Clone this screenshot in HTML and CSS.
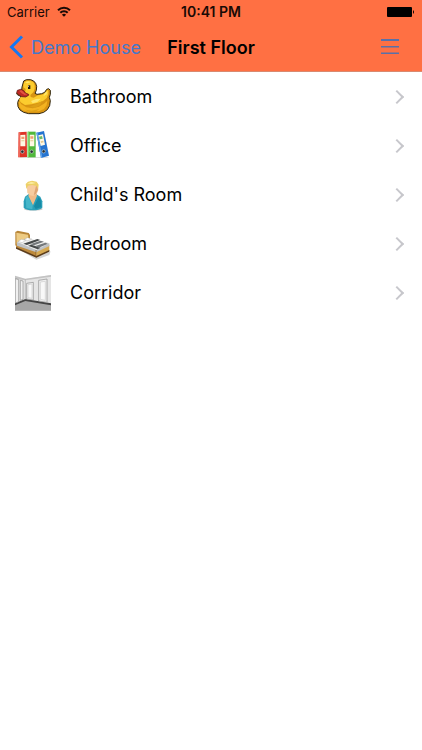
FILE: index.html
```html
<!DOCTYPE html>
<html lang="en">
<head>
    <meta charset="UTF-8">
    <meta name="viewport" content="width=device-width, initial-scale=1">
    <title>First Floor</title>
    <link rel="stylesheet" href="styles.css">
</head>
<body>
<header class="top">
    <div class="status">
        <div class="carrier">
            <span>Carrier</span>
            <svg width="14" height="11" viewBox="0 0 14 11" fill="none" stroke="#1a0a05" stroke-width="2">
                <path d="M1 4.200a8.500 8.500 0 0 1 12 0M3.300 6.700a5.200 5.200 0 0 1 7.400 0"/>
                <path d="M7 10.800L4.900 8.700a3 3 0 0 1 4.200 0z" fill="#1a0a05" stroke="none"/>
            </svg>
        </div>
        <time class="clock">10:41 PM</time>
        <svg class="battery" width="28" height="10" viewBox="0 0 28 10">
            <rect width="25" height="10" rx="1"/>
            <path d="M26 3q2 2 0 4z"/>
        </svg>
    </div>
    <nav class="bar">
        <a class="back" href="#">
            <svg width="15" height="24" viewBox="0 0 15 24" fill="none" stroke="#1677f2" stroke-width="3">
                <path d="M13 1.500L2.500 12L13 22.500"/>
            </svg>
            <span>Demo House</span>
        </a>
        <h1>First Floor</h1>
        <button class="menu" type="button" aria-label="Menu">
            <svg width="18" height="16" viewBox="0 0 18 16" fill="#5a70a8">
                <path d="M0 0h18v2H0zM0 7h18v1.500H0zM0 13.500h18v1.500H0z"/>
            </svg>
        </button>
    </nav>
</header>
<main>
    <ul class="rooms">
        <li><a href="#">
            <svg class="icon" viewBox="21 18 108 108">
                <path d="M47 24l8-4h13l9 4 6 7 3 9-1 12-4 9 6 3 14-2 9-4 6-9 6-2 5 5v12l-3 9 3 10-2 15-7 12-11 8-14 4H62l-15-4-11-7-6-10-1-12 3-9 8-8-4-3-8-4-2-5 6-5 9-3 1-10z" fill="#d89412" stroke="#302712" stroke-width="3" stroke-linejoin="round"/>
                <path d="M49 27l7-4h11l9 5 4 8v11l-4 11-9 8 1 6 9 2 13-7 13-2 9-6 6-8 3 3v9l-5 12-11 9-15 5-19 5-20 2-13-8-4-8 4-8 8-6 5-5 2-13-7-5 1-10z" fill="#fccc2e"/>
                <path d="M33 84l7 10 15 9 19 3 19-5 15-9 10-9-2 14-8 11-15 7-30 2-20-5-9-10z" fill="#f3b321"/>
                <path d="M69 84l15-6 15-1-11 10-14 4zM51 28l10-3 7 3-10 3zM111 59l7-4-2 9-10 6z" fill="#ffe66d"/>
                <path d="M76 96l15-5 12-7-7 13-15 7-17-2zM52 110l19 3 23-5-12 9-19-1z" fill="#dda017"/>
                <path d="M28 52l10-3 8 3 7 8 9 4v3l-9 5-12-1-11-7-4-5z" fill="#bd2924" stroke="#541813" stroke-width="2"/>
                <path d="M33 53l8-1 9 9 8 3-8 2-9-5z" fill="#e35542"/>
                <path d="M60 37h7v11h-7z" fill="#211707"/>
                <path d="M60 38h3v3h-3z" fill="#ddd"/>
            </svg>
            <span>Bathroom</span>
        </a></li>
        <li><a href="#">
            <svg class="icon" viewBox="21 16 108 108">
                <path d="M33 103h84l7 3H38z" fill="#ddd"/>
                <path d="M32 29l24-2 1 76-26 1z" fill="#dd3326"/>
                <path d="M32 29l5-1-1 75-5 1z" fill="#f0685a"/>
                <path d="M59 27h24v77H59z" fill="#50b83b"/>
                <path d="M59 27h4v77h-4z" fill="#82d668"/>
                <path d="M85 30l23-5 15 74-24 7z" fill="#2574d0"/>
                <path d="M85 30l4-1 14 76-4 1z" fill="#61a4e9"/>
                <path d="M37 37l15-1v35H37zM65 36h14v35H65zM91 38l14-3 6 31-13 4z" fill="#fff8e4"/>
                <path d="M40 42h9v7h-9zM67 41h9v7h-9z" fill="#f0a070"/>
                <path d="M40 53h9v3h-9zM67 53h9v3h-9zM98 56l8-2 1 5-8 2z" fill="#e5ca92"/>
                <path d="M93 42l9-2 2 8-9 2z" fill="#68bc68"/>
                <g fill="#272d32" stroke="#c5d0cb" stroke-width="2">
                    <circle cx="43" cy="87" r="5"/><circle cx="71" cy="87" r="5"/><circle cx="107" cy="86" r="5"/>
                </g>
            </svg>
            <span>Office</span>
        </a></li>
        <li><a href="#">
            <svg class="icon" viewBox="21 15 108 108">
                <ellipse cx="76" cy="111" rx="28" ry="5" fill="#ccc"/>
                <path d="M61 67l-10 7-4 14v19q9 8 28 8t28-8V88l-6-14-12-7z" fill="#2a9fb8"/>
                <path d="M53 76l7-5 14 29-1 12-18-4z" fill="#45b6c9"/>
                <path d="M92 75l6 8 2 22-17 6-5-8z" fill="#168aa5"/>
                <path d="M64 63h20l3 8-12 29-14-29z" fill="#f1bb88"/>
                <path d="M56 38h34l1 16-5 12-10 6-10-2-8-8z" fill="#f7cc9f"/>
                <path d="M84 42l5 2 1 10-6 11-7 5z" fill="#dfa575"/>
                <path d="M55 51l-2-15 7-7 12-3 14 3 6 9-2 14-4-10-13-3-13 2z" fill="#edd067"/>
                <path d="M57 35l13-6 13 4-11 3z" fill="#faec9d"/>
            </svg>
            <span>Child's Room</span>
        </a></li>
        <li><a href="#">
            <svg class="icon" viewBox="21 18 108 108">
                <path d="M24 83l61 28 43-17-4 11-39 14z" fill="#d4d4d4"/>
                <path d="M22 36l7-4 33 7 4 6v23L26 82l-4-7z" fill="#b98638"/>
                <path d="M25 38l35 6 3 24-37 11z" fill="#edcb83"/>
                <path d="M25 71l60 22v19L25 83z" fill="#bd893c"/>
                <path d="M85 92l39-18v19l-39 19z" fill="#d6a951"/>
                <path d="M24 81l61 27 39-18v5l-39 18-61-27z" fill="#5b3c1b"/>
                <path d="M27 67l34-11 63 14v8L85 97 27 77z" fill="#bfc2c5"/>
                <path d="M28 66l33-10 62 14-38 20z" fill="#efefee"/>
                <path d="M46 71l42-14 9 3-40 15zM60 77l10-3 28 9-9 5z" fill="#454849"/>
                <path d="M66 73l32-11 10 3-30 11zM82 78l30-10 8 3-28 12z" fill="#74787b"/>
                <path d="M30 64l11-6 12 3-11 7zM48 58l11-5 12 4-12 5z" fill="#fff" stroke="#999" stroke-width="1"/>
                <path d="M84 90v20" stroke="#80551f" stroke-width="2"/>
            </svg>
            <span>Bedroom</span>
        </a></li>
        <li><a href="#">
            <svg class="icon" viewBox="21 16 108 108">
                <path d="M21 23l31 5 77-12v107H21z" fill="#e5e5e5"/>
                <path d="M21 18l31 9 77-11v5L52 32l-31-5z" fill="#c3c3c3"/>
                <path d="M21 104l31-12 77 12v19H21z" fill="#a7a7a7"/>
                <path d="M21 101l31-13 77 13v6L52 94l-31 13z" fill="#454545"/>
                <path d="M52 29v60" stroke="#aaa" stroke-width="2"/>
                <g fill="#f0f0f0" stroke="#8c8c8c" stroke-width="2">
                    <path d="M22 27l10 3v66l-10 4zM37 32l8 2v55l-8 3zM56 41l20-3v53l-20-3zM92 32l25-4v70l-25-4z"/>
                </g>
                <path d="M60 45l12-2v43l-12-2zM97 37l15-2v57l-15-3z" fill="#f8f8f8" stroke="#ccc" stroke-width="2"/>
            </svg>
            <span>Corridor</span>
        </a></li>
    </ul>
</main>
</body>
</html>
```
FILE: styles.css
```css
body{margin:0;background:#fff;color:#000;font-family:Inter,"Liberation Sans",sans-serif;}
a{color:inherit;text-decoration:none;}
svg{display:block;flex:none;}

.top{background:#ff7043;border-bottom:1px solid #d98a70;}
.status{display:grid;grid-template-columns:1fr auto 1fr;align-items:center;height:23px;padding:0 7px;font-size:13px;color:#1a0a05;}
.carrier{display:flex;align-items:center;gap:7px;}
.clock{font-size:14px;font-weight:600;}
.battery{justify-self:end;fill:#000;}

.bar{display:grid;grid-template-columns:1fr auto 1fr;align-items:center;height:48px;padding:0 9px;}
.back{display:flex;align-items:center;gap:7px;font-size:18px;color:#4778c8;white-space:nowrap;}
.bar h1{margin:0;font-size:18px;font-weight:600;white-space:nowrap;}
.menu{justify-self:end;margin:0 14px 0 0;padding:0;border:0;background:none;cursor:pointer;}

.rooms{margin:0;padding:0;list-style:none;}
.rooms a{display:flex;align-items:center;height:49px;padding:0 17px 0 15px;font-size:18px;}
.rooms .icon{width:36px;height:36px;margin-right:19px;}
.rooms a::after{content:"";width:8px;height:8px;margin-left:auto;margin-right:3px;border:solid #c7c7cc;border-width:2px 2px 0 0;transform:rotate(45deg);}
```
